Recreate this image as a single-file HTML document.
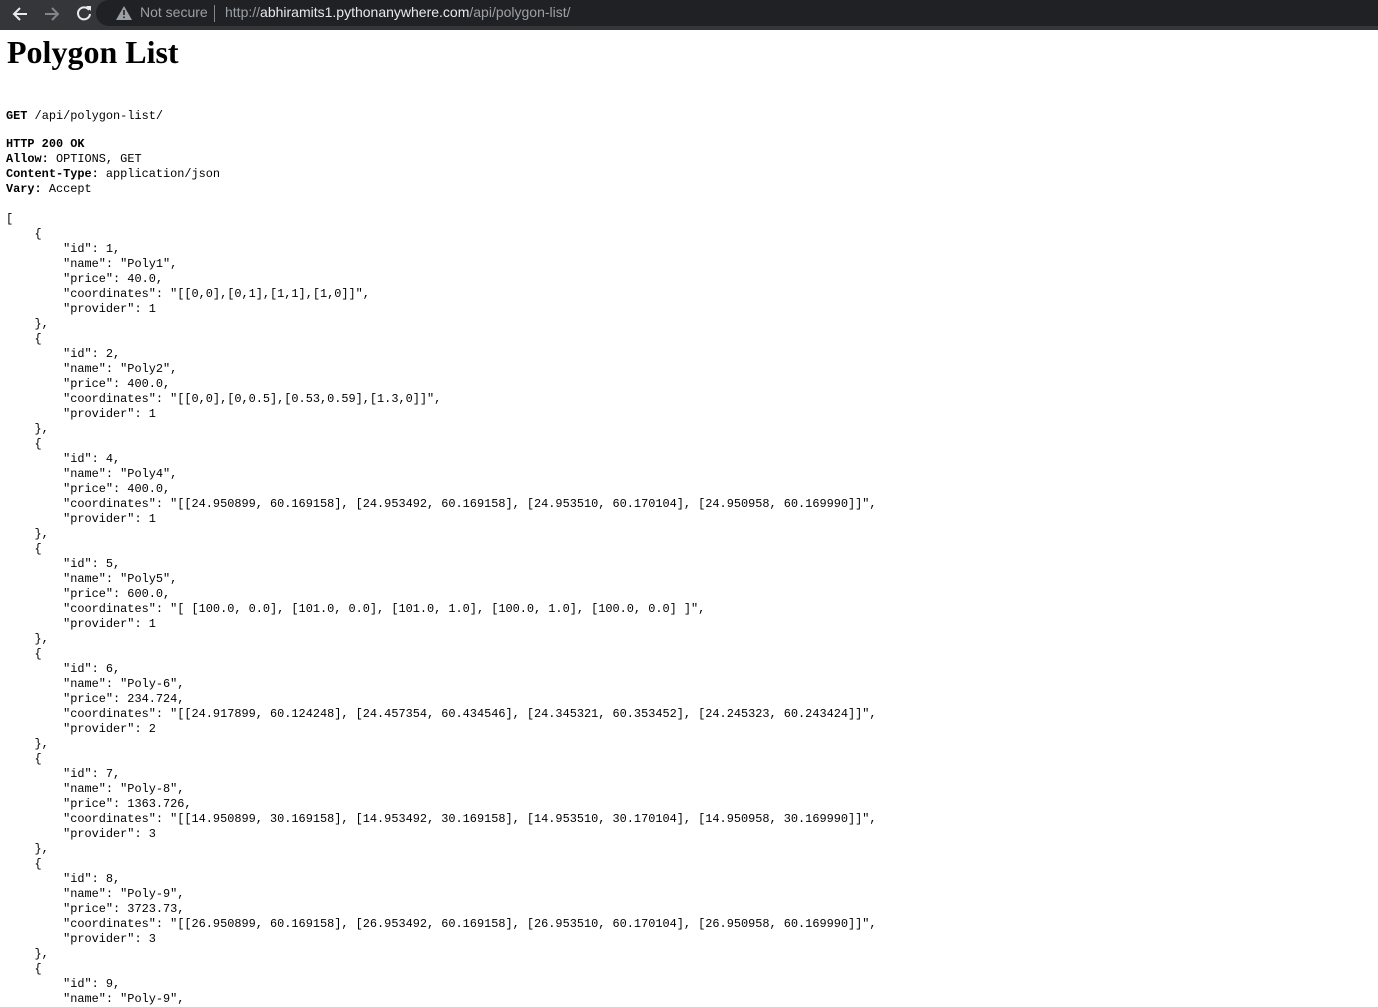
<!DOCTYPE html>
<html><head><meta charset="utf-8"><style>
html,body{margin:0;padding:0;background:#fff;overflow:hidden;width:1378px;height:1000px}
.bar{position:absolute;left:0;top:0;width:1378px;height:30px;background:#35363a}
.pill{position:absolute;left:96px;top:0;width:1300px;height:26px;background:#202124;border-radius:13px}
.bar svg{position:absolute}
.ns{position:absolute;left:140px;top:4px;font:14px "Liberation Sans",sans-serif;color:#9aa0a6}
.sep{position:absolute;left:214px;top:5px;width:1px;height:17px;background:#80868b}
.url{position:absolute;left:225px;top:4px;font:14px "Liberation Sans",sans-serif;color:#9aa0a6}
.url b{font-weight:normal;color:#e8eaed}
h1{position:absolute;left:7px;top:34px;margin:0;font:bold 32px "Liberation Serif",serif;color:#000}
pre{position:absolute;left:6px;margin:0;font:11.9px/15px "Liberation Mono",monospace;color:#000}
pre b{font-weight:bold}
</style></head><body>
<div class="bar"><div class="pill"></div>
<svg style="left:11px;top:5px" width="18" height="18" viewBox="0 0 18 18"><path d="M16 9H3M9 3L3 9l6 6" stroke="#e8eaed" stroke-width="2" fill="none"/></svg>
<svg style="left:43px;top:5px" width="18" height="18" viewBox="0 0 18 18"><path d="M2 9h13M9 3l6 6-6 6" stroke="#80868b" stroke-width="2" fill="none"/></svg>
<svg style="left:75px;top:4px" width="18" height="18" viewBox="0 0 18 18"><path d="M14 6A6 6 0 1 0 15 10" stroke="#e8eaed" stroke-width="2" fill="none"/><path d="M11 2h5v5z" fill="#e8eaed"/></svg>
<svg style="left:116px;top:6px" width="16" height="14" viewBox="0 0 16 14"><path d="M8 0L16 14H0z" fill="#9aa0a6"/><path d="M7.2 4h1.6v5H7.2zM7.2 10.5h1.6v1.6H7.2z" fill="#202124"/></svg>
<div class="ns">Not secure</div><div class="sep"></div>
<div class="url">http://<b>abhiramits1.pythonanywhere.com</b>/api/polygon-list/</div>
</div>
<h1>Polygon List</h1>
<pre style="top:109px"><b>GET</b> /api/polygon-list/</pre>
<pre style="top:137px"><b>HTTP 200 OK</b>
<b>Allow:</b> OPTIONS, GET
<b>Content-Type:</b> application/json
<b>Vary:</b> Accept

[
    {
        "id": 1,
        "name": "Poly1",
        "price": 40.0,
        "coordinates": "[[0,0],[0,1],[1,1],[1,0]]",
        "provider": 1
    },
    {
        "id": 2,
        "name": "Poly2",
        "price": 400.0,
        "coordinates": "[[0,0],[0,0.5],[0.53,0.59],[1.3,0]]",
        "provider": 1
    },
    {
        "id": 4,
        "name": "Poly4",
        "price": 400.0,
        "coordinates": "[[24.950899, 60.169158], [24.953492, 60.169158], [24.953510, 60.170104], [24.950958, 60.169990]]",
        "provider": 1
    },
    {
        "id": 5,
        "name": "Poly5",
        "price": 600.0,
        "coordinates": "[ [100.0, 0.0], [101.0, 0.0], [101.0, 1.0], [100.0, 1.0], [100.0, 0.0] ]",
        "provider": 1
    },
    {
        "id": 6,
        "name": "Poly-6",
        "price": 234.724,
        "coordinates": "[[24.917899, 60.124248], [24.457354, 60.434546], [24.345321, 60.353452], [24.245323, 60.243424]]",
        "provider": 2
    },
    {
        "id": 7,
        "name": "Poly-8",
        "price": 1363.726,
        "coordinates": "[[14.950899, 30.169158], [14.953492, 30.169158], [14.953510, 30.170104], [14.950958, 30.169990]]",
        "provider": 3
    },
    {
        "id": 8,
        "name": "Poly-9",
        "price": 3723.73,
        "coordinates": "[[26.950899, 60.169158], [26.953492, 60.169158], [26.953510, 60.170104], [26.950958, 60.169990]]",
        "provider": 3
    },
    {
        "id": 9,
        "name": "Poly-9",
</pre>
</body></html>
